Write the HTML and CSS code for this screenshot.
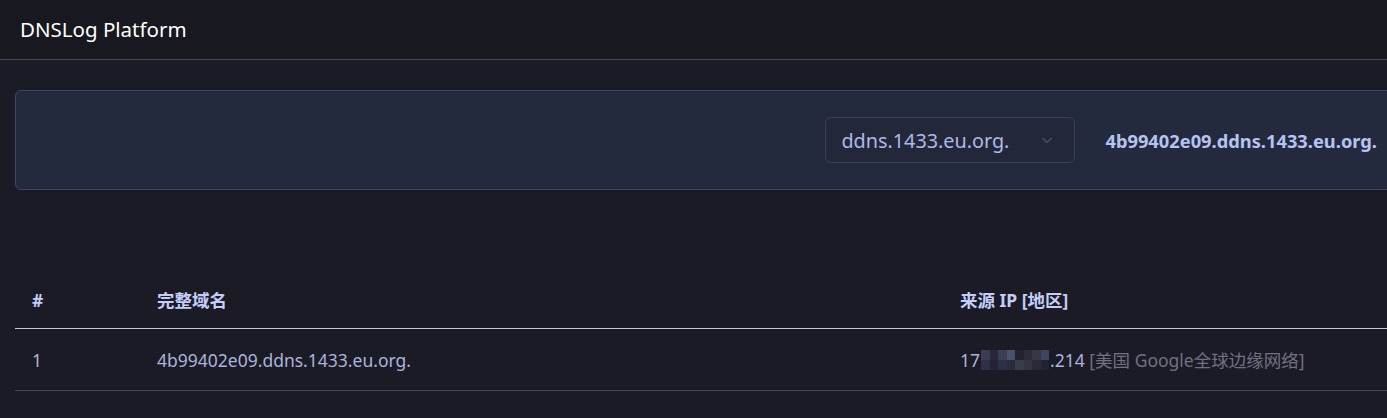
FILE: index.html
```html
<!DOCTYPE html>
<html lang="zh">
<head>
<meta charset="utf-8">
<title>DNSLog Platform</title>
<link rel="stylesheet" href="styles.css">
</head>
<body>
<div class="page">
  <header class="topbar">
    <span class="brand">DNSLog Platform</span>
  </header>
  <main class="main">
    <section class="card">
      <div class="select">
        <span class="select-value">ddns.1433.eu.org.</span>
        <svg class="chev" width="14" height="14" viewBox="0 0 14 14"><path d="M2.5 5 L7 9.5 L11.5 5" fill="none" stroke="#4a4f66" stroke-width="1.4"/></svg>
      </div>
      <span class="subdomain">4b99402e09.ddns.1433.eu.org.</span>
    </section>
    <table class="logs">
      <thead>
        <tr><th class="c1">#</th><th class="c2">完整域名</th><th class="c3">来源 IP [地区]</th></tr>
      </thead>
      <tbody>
        <tr>
          <td>1</td>
          <td>4b99402e09.ddns.1433.eu.org.</td>
          <td><span class="ip">17<span class="mosaic"><span class="mosaic-grid"><i style="background:#3a3d52"></i><i style="background:#2c2736"></i><i style="background:#3b3f56"></i><i style="background:#4a5270"></i><i style="background:#22232f"></i><i style="background:#2a2c3a"></i><i style="background:#363747"></i><i style="background:#3d4560"></i><i style="background:#2c3348"></i><i style="background:#232433"></i><i style="background:#2a3247"></i><i style="background:#2b2c3a"></i><i style="background:#3b3c4a"></i><i style="background:#333543"></i><i style="background:#2a2b38"></i><i style="background:#222330"></i></span></span>.214</span> <span class="region">[美国 Google全球边缘网络]</span></td>
        </tr>
      </tbody>
    </table>
  </main>
</div>
</body>
</html>
```
FILE: styles.css
```css
html, body {
  margin: 0;
  padding: 0;
  background: #1b1b26;
  overflow: hidden;
}
body {
  font-family: "Segoe UI", "Noto Sans", "Noto Sans CJK SC", sans-serif;
  color: #aeb8e2;
}
.page {
  width: 1420px;
}
.topbar {
  height: 59px;
  background: #181820;
  border-bottom: 1px solid #44465a;
  display: flex;
  align-items: center;
  padding-left: 20px;
}
.brand {
  color: #ffffff;
  font-size: 20.5px;
  position: relative;
  top: -1px;
}
.main {
  padding: 30px 15px 0 15px;
}
.card {
  height: 98px;
  background: #242a3e;
  border: 1px solid #3f4563;
  border-radius: 6px;
  display: flex;
  align-items: center;
  justify-content: flex-end;
  padding-right: 27px;
  gap: 30px;
}
.select {
  height: 44px;
  border: 1px solid #3a4058;
  border-radius: 6px;
  background: #222839;
  display: flex;
  align-items: center;
  justify-content: space-between;
  padding: 0 20px 0 15px;
  box-sizing: content-box;
  width: 213px;
}
.select-value {
  font-size: 19.8px;
  color: #aeb9e6;
}
.chev { display: block; }
.subdomain {
  font-size: 18.3px;
  font-weight: 700;
  color: #b7c3f0;
}
.logs {
  width: 100%;
  margin-top: 82px;
  border-collapse: collapse;
  font-size: 17.5px;
}
.logs th {
  text-align: left;
  font-weight: 700;
  color: #c3cdf7;
  height: 56px;
  padding: 0 0 0 17px;
  border-bottom: 1px solid #c5c9e0;
  vertical-align: middle;
  line-height: 24px;
}
.logs .c1 { width: 108px; }
.logs .c2 { width: 786px; }
.logs td {
  height: 61px;
  padding: 0 0 0 17px;
  border-bottom: 1px solid #44465a;
  color: #aab4dc;
  line-height: 24px;
}
.ip { color: #aab4dc; }
.mosaic {
  display: inline-block;
  overflow: hidden;
  width: 68px;
  height: 20px;
  vertical-align: -3px;
  margin: 0 1px;
}
.mosaic-grid {
  display: grid;
  grid-template-columns: repeat(8, 8.5px);
  grid-template-rows: 10px 10px;
}
.mosaic-grid i { display: block; }
.region { color: #6f7282; }
```
